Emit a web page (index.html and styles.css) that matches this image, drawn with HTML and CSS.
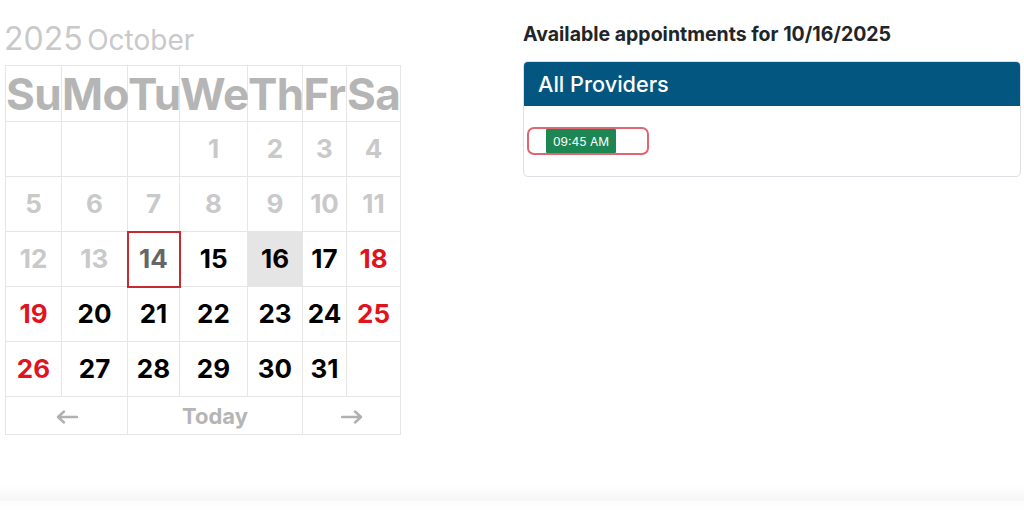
FILE: index.html
```html
<!DOCTYPE html>
<html lang="en">
<head>
<meta charset="utf-8">
<title>Appointments</title>
<link rel="stylesheet" href="styles.css">
</head>
<body>
<div class="page">
  <div class="main">
    <section class="cal-col">
      <div class="cal-title"><span class="year">2025</span> <span class="month">October</span></div>
      <table class="cal">
        <colgroup>
          <col class="c-su"><col class="c-mo"><col class="c-tu"><col class="c-we"><col class="c-th"><col class="c-fr"><col class="c-sa">
        </colgroup>
        <thead>
          <tr><th>Su</th><th>Mo</th><th>Tu</th><th>We</th><th>Th</th><th>Fr</th><th>Sa</th></tr>
        </thead>
        <tbody>
          <tr><td></td><td></td><td></td><td class="past">1</td><td class="past">2</td><td class="past">3</td><td class="past">4</td></tr>
          <tr><td class="past">5</td><td class="past">6</td><td class="past">7</td><td class="past">8</td><td class="past">9</td><td class="past">10</td><td class="past">11</td></tr>
          <tr><td class="past">12</td><td class="past">13</td><td class="today">14</td><td>15</td><td class="selected">16</td><td>17</td><td class="weekend">18</td></tr>
          <tr><td class="weekend">19</td><td>20</td><td>21</td><td>22</td><td>23</td><td>24</td><td class="weekend">25</td></tr>
          <tr><td class="weekend">26</td><td>27</td><td>28</td><td>29</td><td>30</td><td>31</td><td></td></tr>
        </tbody>
        <tfoot>
          <tr>
            <td colspan="2"><svg class="arrow" width="22" height="14" viewBox="0 0 22 14"><path d="M21 7H2M8 1.5L2 7l6 5.5" fill="none" stroke="#b0b0b0" stroke-width="2.4" stroke-linecap="round" stroke-linejoin="round"/></svg></td>
            <td colspan="3" class="today-btn">Today</td>
            <td colspan="2"><svg class="arrow" width="22" height="14" viewBox="0 0 22 14"><path d="M1 7h19M14 1.5L20 7l-6 5.5" fill="none" stroke="#b0b0b0" stroke-width="2.4" stroke-linecap="round" stroke-linejoin="round"/></svg></td>
          </tr>
        </tfoot>
      </table>
    </section>
    <section class="appt-col">
      <h2 class="appt-title">Available appointments for 10/16/2025</h2>
      <div class="card">
        <div class="card-header">All Providers</div>
        <div class="card-body">
          <div class="slot-wrap"><button class="slot">09:45 AM</button></div>
        </div>
      </div>
    </section>
  </div>
  <footer class="page-foot"></footer>
</div>
</body>
</html>
```

FILE: styles.css
```css
* { box-sizing: border-box; }

html, body {
  margin: 0;
  padding: 0;
  background: #ffffff;
  font-family: Inter, "Noto Sans", "Liberation Sans", sans-serif;
}

.page {
  min-height: 512px;
  display: flex;
  flex-direction: column;
}

.main {
  display: flex;
  align-items: flex-start;
}

.cal-col {
  flex: none;
  width: 523px;
  padding: 19px 0 0 4px;
}

.cal-title {
  line-height: 40px;
  color: #c9c9c9;
  margin-bottom: 1px;
  white-space: nowrap;
}

.cal-title .year {
  font-size: 32px;
  font-weight: 400;
}

.cal-title .month {
  font-size: 28px;
  font-weight: 400;
}

.cal {
  border-collapse: collapse;
  table-layout: fixed;
  width: 396px;
  margin-left: 1px;
}

.c-su { width: 56px; }
.c-mo { width: 66px; }
.c-tu { width: 52px; }
.c-we { width: 68px; }
.c-th { width: 55px; }
.c-fr { width: 44px; }
.c-sa { width: 54px; }

.cal th,
.cal td {
  border: 1px solid #e6e6e6;
  padding: 0;
  text-align: center;
  vertical-align: middle;
}

.cal th {
  height: 56px;
  font-size: 44px;
  font-weight: 700;
  color: #b5b5b5;
  letter-spacing: -0.5px;
  line-height: 1;
}

.cal tbody td {
  height: 55px;
  font-size: 26px;
  font-weight: 700;
  color: #000000;
  line-height: 1;
}

.cal tbody td.past { color: #c9c9c9; }
.cal tbody td.weekend { color: #e0141c; }
.cal tbody td.today {
  border: 2px solid #c62b32;
  color: #666666;
}
.cal tbody td.selected { background: #e5e5e5; }

.cal tfoot td {
  height: 38px;
  color: #b5b5b5;
  line-height: 1;
}

.cal tfoot .today-btn {
  font-size: 22px;
  font-weight: 700;
}

.arrow { display: block; margin: 2px auto 0; }

.appt-col {
  flex: 1;
  min-width: 0;
  margin-right: 3px;
  padding-top: 23px;
}

.appt-title {
  margin: 0 0 15px;
  font-size: 19.5px;
  font-weight: 700;
  line-height: 1.2;
  color: #212529;
  white-space: nowrap;
}

.card {
  border: 1px solid #dcdfe3;
  border-radius: 5px;
  overflow: hidden;
}

.card-header {
  background: #02567f;
  color: #ffffff;
  height: 44px;
  padding: 0 14px;
  display: flex;
  align-items: center;
  font-size: 21.7px;
  font-weight: 500;
}

.card-body {
  padding: 21px 3px 21px;
}

.slot-wrap {
  width: 122px;
  height: 28px;
  border: 2px solid #df6570;
  border-radius: 7px;
  padding: 0 0 0 17px;
  display: flex;
  align-items: center;
}

.slot {
  font-family: Inter, "Noto Sans", "Liberation Sans", sans-serif;
  background: #1d8754;
  color: #ffffff;
  border: none;
  border-radius: 1px;
  height: 24px;
  width: 70px;
  padding: 0;
  font-size: 12px;
  font-weight: 400;
}

.page-foot {
  margin-top: auto;
  height: 26px;
  background: linear-gradient(to bottom, #ffffff 0%, #f6f6f6 55%, #fcfcfc 60%, #ffffff 100%);
}
```
